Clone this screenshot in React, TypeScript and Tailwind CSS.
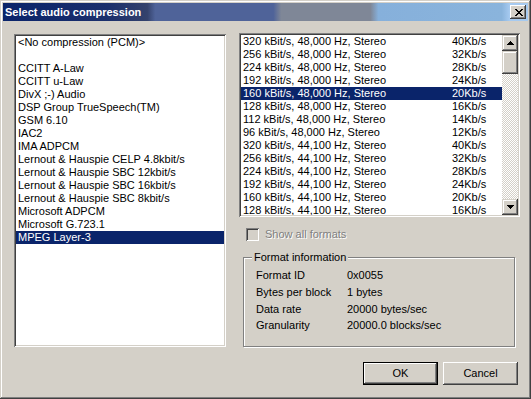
import React from "react";

const leftItems = [
  "<No compression (PCM)>",
  "",
  "CCITT A-Law",
  "CCITT u-Law",
  "DivX ;-) Audio",
  "DSP Group TrueSpeech(TM)",
  "GSM 6.10",
  "IAC2",
  "IMA ADPCM",
  "Lernout & Hauspie CELP 4.8kbit/s",
  "Lernout & Hauspie SBC 12kbit/s",
  "Lernout & Hauspie SBC 16kbit/s",
  "Lernout & Hauspie SBC 8kbit/s",
  "Microsoft ADPCM",
  "Microsoft G.723.1",
  "MPEG Layer-3",
];

const rightItems: [string, string][] = [
  ["320 kBit/s, 48,000 Hz, Stereo", "40Kb/s"],
  ["256 kBit/s, 48,000 Hz, Stereo", "32Kb/s"],
  ["224 kBit/s, 48,000 Hz, Stereo", "28Kb/s"],
  ["192 kBit/s, 48,000 Hz, Stereo", "24Kb/s"],
  ["160 kBit/s, 48,000 Hz, Stereo", "20Kb/s"],
  ["128 kBit/s, 48,000 Hz, Stereo", "16Kb/s"],
  ["112 kBit/s, 48,000 Hz, Stereo", "14Kb/s"],
  ["96 kBit/s, 48,000 Hz, Stereo", "12Kb/s"],
  ["320 kBit/s, 44,100 Hz, Stereo", "40Kb/s"],
  ["256 kBit/s, 44,100 Hz, Stereo", "32Kb/s"],
  ["224 kBit/s, 44,100 Hz, Stereo", "28Kb/s"],
  ["192 kBit/s, 44,100 Hz, Stereo", "24Kb/s"],
  ["160 kBit/s, 44,100 Hz, Stereo", "20Kb/s"],
  ["128 kBit/s, 44,100 Hz, Stereo", "16Kb/s"],
];

const info: [string, string][] = [
  ["Format ID", "0x0055"],
  ["Bytes per block", "1 bytes"],
  ["Data rate", "20000 bytes/sec"],
  ["Granularity", "20000.0 blocks/sec"],
];

function ArrowUp() {
  return (
    <svg width="7" height="4" viewBox="0 0 7 4" shapeRendering="crispEdges">
      <rect x="3" y="0" width="1" height="1" fill="#000" />
      <rect x="2" y="1" width="3" height="1" fill="#000" />
      <rect x="1" y="2" width="5" height="1" fill="#000" />
      <rect x="0" y="3" width="7" height="1" fill="#000" />
    </svg>
  );
}

function ArrowDown() {
  return (
    <svg width="7" height="4" viewBox="0 0 7 4" shapeRendering="crispEdges">
      <rect x="0" y="0" width="7" height="1" fill="#000" />
      <rect x="1" y="1" width="5" height="1" fill="#000" />
      <rect x="2" y="2" width="3" height="1" fill="#000" />
      <rect x="3" y="3" width="1" height="1" fill="#000" />
    </svg>
  );
}

function CloseGlyph() {
  const rows = [
    [0, 1, 6, 7],
    [1, 2, 5, 6],
    [2, 3, 4, 5],
    [3, 4],
    [2, 3, 4, 5],
    [1, 2, 5, 6],
    [0, 1, 6, 7],
  ];
  return (
    <svg width="8" height="7" viewBox="0 0 8 7" shapeRendering="crispEdges">
      {rows.map((r, y) =>
        r.map((x) => <rect key={`${x}-${y}`} x={x} y={y} width="1" height="1" fill="#000" />)
      )}
    </svg>
  );
}

export default function App() {
  return (
    <div className="w-[531px] h-[399px] bg-[#d4d0c8] p-[3px] shadow-[inset_-1px_-1px_#404040,inset_1px_1px_#d4d0c8,inset_-2px_-2px_#808080,inset_2px_2px_#ffffff] font-['Liberation_Sans',Arial,sans-serif] text-[11px] text-black flex flex-col select-none">
      {/* Title bar */}
      <div className="h-[18px] flex items-center justify-between pl-[2px] pr-[2px] bg-[linear-gradient(to_right,#0a246a_0%,#1b2f6c_20%,#34426c_27.5%,#4f6399_29%,#4f6399_51.5%,#7f8797_53%,#7f8797_70%,#86b0db_71.5%,#8ab4dc_95%,#a6caf0_96.5%,#a6caf0_100%)]">
        <span className="text-white font-bold text-[11px] leading-[13px]">Select audio compression</span>
        <div className="w-[16px] h-[14px] bg-[#d4d0c8] shadow-[inset_-1px_-1px_#404040,inset_1px_1px_#ffffff,inset_-2px_-2px_#808080,inset_2px_2px_#d4d0c8] flex items-center justify-center pl-[1px]">
          <CloseGlyph />
        </div>
      </div>

      {/* Body */}
      <div className="flex flex-col pl-[11px] pt-[12px]">
        <div className="flex">
          {/* Left list */}
          <div className="mt-[1px] w-[212px] h-[313px] bg-white p-[2px] shadow-[inset_1px_1px_#808080,inset_-1px_-1px_#ffffff,inset_2px_2px_#404040,inset_-2px_-2px_#d4d0c8]">
            <div className="flex flex-col">
              {leftItems.map((t, i) => (
                <div
                  key={i}
                  className={`h-[13px] leading-[13px] pl-[2px] whitespace-pre ${
                    i === 15 ? "bg-[#0a246a] text-white" : ""
                  }`}
                >
                  {t || " "}
                </div>
              ))}
            </div>
          </div>

          {/* Right column */}
          <div className="ml-[13px] w-[281px] flex flex-col">
            <div className="h-[184px] bg-white p-[2px] flex shadow-[inset_1px_1px_#808080,inset_-1px_-1px_#ffffff,inset_2px_2px_#404040,inset_-2px_-2px_#d4d0c8]">
              <div className="flex-1 overflow-hidden flex flex-col">
                {rightItems.map(([a, b], i) => (
                  <div
                    key={i}
                    className={`h-[13px] shrink-0 leading-[13px] pl-[2px] flex whitespace-nowrap ${
                      i === 4 ? "bg-[#0a246a] text-white" : ""
                    }`}
                  >
                    <span className="w-[209px] shrink-0">{a}</span>
                    <span>{b}</span>
                  </div>
                ))}
              </div>
              {/* Scrollbar */}
              <div className="w-[16px] flex flex-col bg-[repeating-conic-gradient(#ffffff_0_25%,#d4d0c8_0_50%)] bg-[length:2px_2px]">
                <div className="h-[16px] bg-[#d4d0c8] shadow-[inset_-1px_-1px_#404040,inset_1px_1px_#d4d0c8,inset_-2px_-2px_#808080,inset_2px_2px_#ffffff] flex items-center justify-center">
                  <ArrowUp />
                </div>
                <div className="h-[23px] bg-[#d4d0c8] shadow-[inset_-1px_-1px_#404040,inset_1px_1px_#d4d0c8,inset_-2px_-2px_#808080,inset_2px_2px_#ffffff]" />
                <div className="flex-1" />
                <div className="h-[16px] bg-[#d4d0c8] shadow-[inset_-1px_-1px_#404040,inset_1px_1px_#d4d0c8,inset_-2px_-2px_#808080,inset_2px_2px_#ffffff] flex items-center justify-center">
                  <ArrowDown />
                </div>
              </div>
            </div>

            {/* Checkbox */}
            <div className="mt-[11px] ml-[7px] h-[13px] flex items-center">
              <div className="w-[13px] h-[13px] bg-[#d4d0c8] shadow-[inset_1px_1px_#808080,inset_-1px_-1px_#ffffff,inset_2px_2px_#404040,inset_-2px_-2px_#d4d0c8]" />
              <span className="ml-[6px] text-[#808080] [text-shadow:1px_1px_0_#ffffff] leading-[13px]">
                Show all formats
              </span>
            </div>

            {/* Group box */}
            <div className="relative mt-[16px] ml-[4px] w-[272px] h-[90px] border border-[#808080] shadow-[inset_1px_1px_#ffffff,1px_1px_#ffffff]">
              <span className="absolute left-[8px] top-[-7px] px-[2px] bg-[#d4d0c8] leading-[13px]">
                Format information
              </span>
              <div className="pt-[9px] pl-[12px] flex flex-col">
                {info.map(([k, v], i) => (
                  <div key={i} className={`flex ${i === 2 ? "h-[16px]" : "h-[17px]"} items-center`}>
                    <span className="w-[91px]">{k}</span>
                    <span>{v}</span>
                  </div>
                ))}
              </div>
            </div>
          </div>
        </div>

        {/* Buttons */}
        <div className="mt-[15px] flex justify-end pr-[10px] gap-[5px]">
          <div className="w-[75px] h-[23px] border border-black bg-[#d4d0c8] shadow-[inset_-1px_-1px_#404040,inset_1px_1px_#ffffff,inset_-2px_-2px_#808080,inset_2px_2px_#d4d0c8] flex items-center justify-center">
            OK
          </div>
          <div className="w-[75px] h-[23px] bg-[#d4d0c8] shadow-[inset_-1px_-1px_#404040,inset_1px_1px_#ffffff,inset_-2px_-2px_#808080,inset_2px_2px_#d4d0c8] flex items-center justify-center">
            Cancel
          </div>
        </div>
      </div>
    </div>
  );
}
